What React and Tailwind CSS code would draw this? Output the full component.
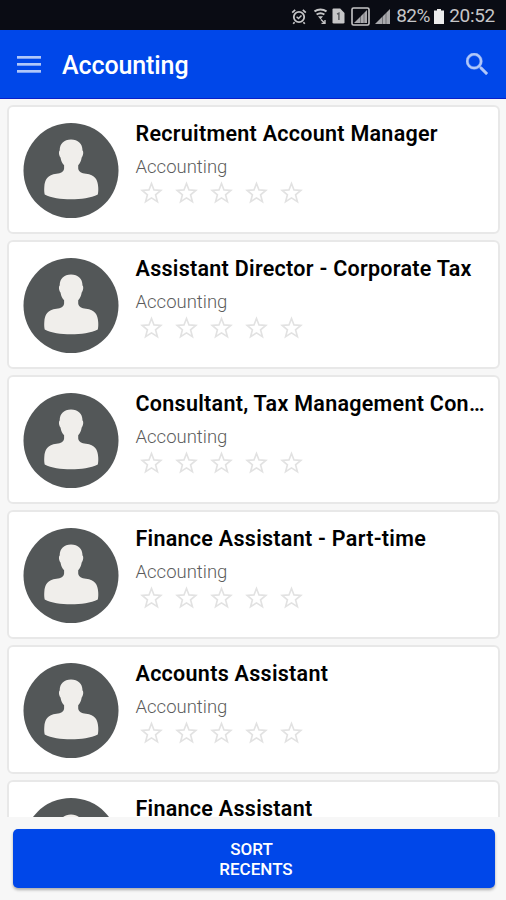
import React from 'react';

const JOBS = [
  { id: 1, title: 'Recruitment Account Manager', category: 'Accounting' },
  { id: 2, title: 'Assistant Director - Corporate Tax', category: 'Accounting' },
  { id: 3, title: 'Consultant, Tax Management Con…', category: 'Accounting' },
  { id: 4, title: 'Finance Assistant - Part-time', category: 'Accounting' },
  { id: 5, title: 'Accounts Assistant', category: 'Accounting' },
  { id: 6, title: 'Finance Assistant', category: 'Accounting' }
];

const AlarmIcon = () => (
  <svg className="w-[16px] h-[17px]" viewBox="0 0 16 17" fill="none" stroke="currentColor">
    <circle cx="8" cy="9" r="5.2" strokeWidth="1.8" />
    <path d="M1.2 4.6l3-2.8M14.8 4.6l-3-2.8M3.6 14.2l-1.4 1.6M12.4 14.2l1.4 1.6" strokeWidth="1.7" />
    <path d="M5.6 8.8l1.9 1.8 3-3.2" strokeWidth="1.4" />
  </svg>
);

const WifiIcon = () => (
  <svg className="w-[13px] h-[16px]" viewBox="0 0 13 16" fill="none" stroke="currentColor">
    <path d="M.5 3.400C4 .8 9 .8 12.500 3.400M2.600 6.600c2.300-1.700 5.500-1.700 7.800 0" strokeWidth="1.9" />
    <path d="M4 8.300h5L6.500 11.400z" fill="currentColor" stroke="none" />
    <path d="M7 11.500l4 4M11 12v3.500H7.500" strokeWidth="1.400" />
  </svg>
);

const SimIcon = () => (
  <svg className="w-[13px] h-[16px]" viewBox="0 0 13 16">
    <path d="M1.5.5h6.700L12.500 5v9.200q0 1.300-1.300 1.300H1.800Q.5 15.500.5 14.200V1.500q0-1 1-1z" fill="currentColor" />
    <path d="M5 6.200l1.900-1v6.800" fill="none" stroke="#55575c" strokeWidth="1.4" />
  </svg>
);

const SignalIcon = ({ boxed }) => (
  <svg className={boxed ? 'w-[19px] h-[19px]' : 'w-[17px] h-[19px]'} viewBox={boxed ? '0 0 19 19' : '1 0 17 19'}>
    {boxed && <rect x="1" y="1" width="17" height="17" rx="1.5" fill="none" stroke="currentColor" strokeWidth="1.6" />}
    <path d={boxed ? 'M3 16L16 3v13z' : 'M2 17L17 2v15z'} fill="currentColor" opacity="0.85" />
    <path d="M9.5 9v8M13 5.5V17" stroke="#0c0e16" strokeWidth="0.7" opacity="0.5" />
  </svg>
);

const BatteryIcon = () => (
  <svg className="w-[10px] h-[15px]" viewBox="0 0 10 15" fill="currentColor">
    <path d="M3 0h4v1.500h3V15H0V1.500h3z" />
  </svg>
);

const MenuIcon = () => (
  <svg className="w-[24px] h-[17px]" viewBox="0 0 24 17" fill="currentColor">
    <rect y="0" width="24" height="2.700" />
    <rect y="7" width="24" height="2.700" />
    <rect y="14" width="24" height="2.700" />
  </svg>
);

const SearchIcon = () => (
  <svg className="w-[22px] h-[22px]" viewBox="3 3 17.5 17.5" fill="currentColor" stroke="currentColor" strokeWidth="0.300">
    <path d="M15.5 14h-.79l-.28-.27A6.471 6.471 0 0 0 16 9.5 6.5 6.5 0 1 0 9.5 16c1.61 0 3.09-.59 4.23-1.57l.27.28v.79l5 4.99L20.49 19l-4.99-5zm-6 0C7.01 14 5 11.99 5 9.5S7.01 5 9.5 5 14 7.01 14 9.5 11.99 14 9.500 14z" />
  </svg>
);

const Avatar = () => (
  <svg className="w-[96px] h-[95px] shrink-0" viewBox="-0.5 0 96 95">
    <circle cx="47.5" cy="47.5" r="47.5" fill="#535758" />
    <path
      d="M47.500 16.500C54.500 16.500 59 20.500 59 27.500c1.300 1.200.8 5.300-.8 7-.6 3.500-1.700 5.800-3.500 7.700v3.300c.6 3.400 3.300 4.700 7.800 5.300 9 1.200 11.800 5.700 12.200 13.200.2 2.500.1 5.500-.4 7.500-7 3.500-16.800 4.800-26.800 4.800s-19.800-1.300-26.300-4.800c-.5-2-.6-5-.4-7.500.4-7.500 3.200-12 12.200-13.200 4.500-.6 7.100-1.900 7.600-5.300v-3.300c-1.900-1.900-3-4.200-3.600-7.700-1.600-1.700-2.100-5.800-.8-7C36.200 20.500 40.500 16.500 47.500 16.500z"
      fill="#f0eeeb"
    />
  </svg>
);

const Star = () => (
  <svg className="w-[23px] h-[23px]" viewBox="1.5 1.5 21 20.5" fill="none" stroke="#e2e2e2" strokeWidth="1.5">
    <path d="M12 3.500l2.300 5.900 6.200.4-4.800 4 1.700 6.300L12 16.700l-5.400 3.400 1.700-6.300-4.800-4 6.200-.4z" />
  </svg>
);

const JobCard = ({ job }) => (
  <article className="flex h-[129px] shrink-0 rounded-[6px] border-2 border-[#e8e8e8] bg-white pt-4 pl-[14px] pr-[5px]">
    <Avatar />
    <div className="ml-[16.500px] min-w-0 flex-1">
      <h2 className="-mt-[2px] text-[21.500px] leading-[26px] font-semibold whitespace-nowrap tracking-[0.280px] text-black">
        {job.title}
      </h2>
      <p className="mt-[8px] text-[18.500px] leading-[24px] font-light text-[#5c5c5c]">{job.category}</p>
      <div className="mt-[2px] ml-[4px] flex gap-[12.200px]">
        {[1, 2, 3, 4, 5].map((n) => (
          <Star key={n} />
        ))}
      </div>
    </div>
  </article>
);

const App = () => {
  return (
    <div className="flex h-screen w-full flex-col overflow-hidden bg-[#f7f7f7] font-[Roboto,sans-serif]">
      {/* Status bar */}
      <div className="flex h-[30px] shrink-0 items-center justify-end bg-[#0a0c14] pt-[2px] pr-[11px] text-[#c6c6c8]">
        <AlarmIcon />
        <span className="ml-[7px] flex"><WifiIcon /></span>
        <span className="ml-[5px] flex"><SimIcon /></span>
        <span className="ml-[6px] flex"><SignalIcon boxed /></span>
        <span className="ml-[4px] flex"><SignalIcon /></span>
        <span className="ml-[5px] w-[34px] text-[19px] leading-[24px] tracking-[-0.500px]">82%</span>
        <span className="ml-[4px] flex text-[#ececec]"><BatteryIcon /></span>
        <span className="ml-[5px] text-[19px] leading-[24px] tracking-[-0.300px]">20:52</span>
      </div>

      <header className="flex h-[69px] shrink-0 items-center border-b border-[#0a1fc8] bg-[#0047e9] pr-[18px] pl-[16.500px]">
        <button className="text-[#b0c7f9]"><MenuIcon /></button>
        <h1 className="ml-[21.500px] flex-1 pt-[3px] text-[25px] leading-[30px] font-medium tracking-[-0.100px] text-white">Accounting</h1>
        <button className="text-[#b0c7f9]"><SearchIcon /></button>
      </header>

      <main className="flex min-h-0 flex-1 flex-col gap-[6px] overflow-hidden pt-[6px] pr-[6px] pl-[7px]">
        {JOBS.map((job) => (
          <JobCard key={job.id} job={job} />
        ))}
      </main>

      <footer className="h-[83px] shrink-0 bg-[#f7f7f7] pr-[11.500px] pl-[12.500px] pt-[12px]">
        <button className="flex h-[59px] w-full flex-col items-center justify-center rounded-[5px] bg-[#0047e9] pt-px pl-[5px] text-[17px] leading-[20px] font-medium text-white shadow-[0_2px_3px_rgba(0,0,0,0.300)]">
          <span className="pr-[9px]">SORT</span>
          <span>RECENTS</span>
        </button>
      </footer>
    </div>
  );
};

export default App;
